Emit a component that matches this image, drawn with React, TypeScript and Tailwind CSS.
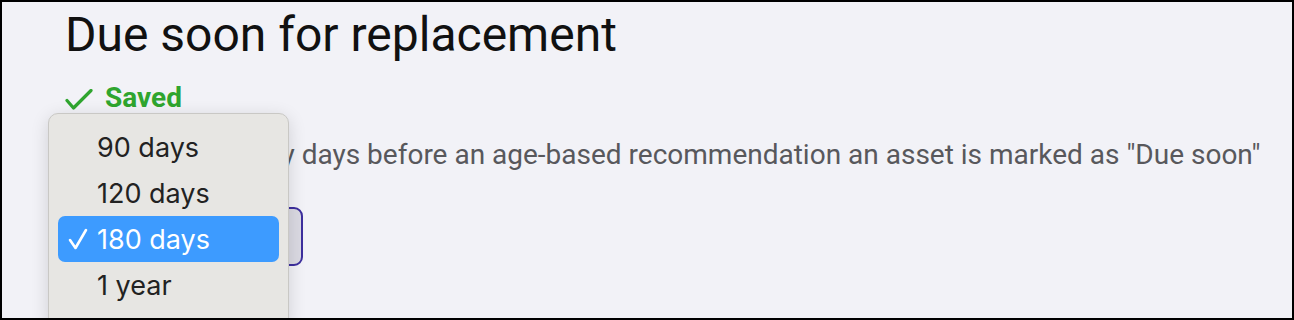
import { useState } from 'react';

const options = ['90 days', '120 days', '180 days', '1 year'];

export default function App() {
  const [value] = useState('180 days');

  return (
    <div className="relative h-[320px] w-full overflow-hidden border-2 border-black bg-[#f2f2f7] font-['Roboto',sans-serif]">
      {/* Settings block */}
      <div className="flex flex-col pl-[63px] pt-[5px]">
        <h1 className="text-[48px] leading-[56px] font-normal text-[#111111]">Due soon for replacement</h1>

        <div className="mt-[19px] flex h-[32px] items-center gap-[12px] text-[#2fa52f]">
          <svg width="28" height="24" viewBox="0 0 28 24" fill="none" className="mt-[6px]">
            <path d="M2 11.5 L8.5 19 L26 1.5" stroke="currentColor" strokeWidth="3.2" strokeLinecap="round" strokeLinejoin="round" />
          </svg>
          <span className="text-[28px] leading-[32px] font-bold">Saved</span>
        </div>

        <p className="mt-[25px] text-[28px] leading-[32px] text-[#58585c]">
          Choose how many days before an age-based recommendation an asset is marked as "Due soon"
        </p>

        <div className="mt-[36px] flex h-[59px] w-[238px] items-center rounded-[9px] border-2 border-[#3d2f9e] bg-[#dbdae3] px-4 text-[24px] text-[#222]">
          {value}
        </div>
      </div>

      {/* Native select popup */}
      <div className="absolute left-[46px] top-[111px] h-[215px] w-[241px] rounded-[10px] border border-[#c9c8c5] bg-[#e7e6e3] px-[9px] pt-[10px] font-['Inter',sans-serif] shadow-[0_4px_18px_rgba(0,0,0,0.14)]">
        {options.map((o) => {
          const selected = o === value;
          return (
            <div
              key={o}
              className={
                selected
                  ? 'flex h-[46px] items-center rounded-[7px] bg-[#3d9bff] text-white'
                  : 'flex h-[46px] items-center text-[#222222]'
              }
            >
              <span className="flex w-[39px] justify-center pl-[1px]">
                {selected && (
                  <svg width="20" height="22" viewBox="0 0 20 22" fill="none">
                    <path d="M2 12 L7.5 20 L18 2" stroke="currentColor" strokeWidth="2.6" strokeLinecap="round" strokeLinejoin="round" />
                  </svg>
                )}
              </span>
              <span className="text-[27px] leading-none">{o}</span>
            </div>
          );
        })}
      </div>
    </div>
  );
}
